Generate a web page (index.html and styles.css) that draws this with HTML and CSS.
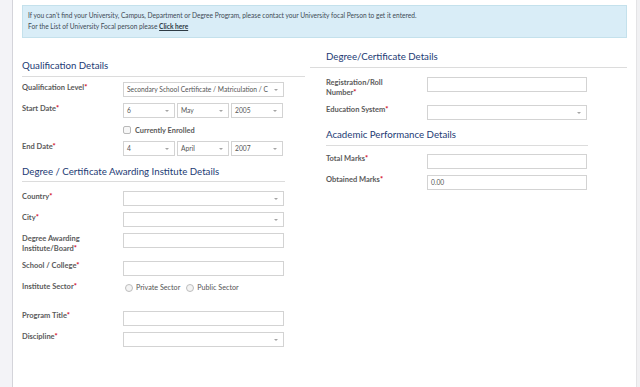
FILE: index.html
```html
<!DOCTYPE html>
<html lang="en">
<head>
  <meta charset="UTF-8">
  <meta name="viewport" content="width=device-width, initial-scale=1.0">
  <title>Qualification Details</title>
  <link rel="stylesheet" href="styles.css">
</head>
<body>
  <div class="shell">
    <div class="gutter"></div>
    <main class="panel">
      <div class="alert">
        If you can't find your University, Campus, Department or Degree Program, please contact your University focal Person to get it entered.<br>
        For the List of University Focal person please <a href="#">Click here</a>
      </div>

      <div class="columns">
        <!-- Left column -->
        <section class="col col-left">
          <h3 class="section-title first">Qualification Details</h3>
          <hr class="rule">

          <div class="row">
            <label>Qualification Level<span class="req">*</span></label>
            <div class="field select">Secondary School Certificate / Matriculation / C<span class="caret"></span></div>
          </div>

          <div class="row">
            <label>Start Date<span class="req">*</span></label>
            <div class="date">
              <div class="field select">6<span class="caret"></span></div>
              <div class="field select">May<span class="caret"></span></div>
              <div class="field select">2005<span class="caret"></span></div>
            </div>
          </div>

          <div class="row row-check">
            <label></label>
            <div class="check"><span class="box"></span>Currently Enrolled</div>
          </div>

          <div class="row">
            <label>End Date<span class="req">*</span></label>
            <div class="date">
              <div class="field select">4<span class="caret"></span></div>
              <div class="field select">April<span class="caret"></span></div>
              <div class="field select">2007<span class="caret"></span></div>
            </div>
          </div>

          <h3 class="section-title second">Degree / Certificate Awarding Institute Details</h3>
          <hr class="rule short">

          <div class="row">
            <label>Country<span class="req">*</span></label>
            <div class="field select"><span class="caret"></span></div>
          </div>
          <div class="row">
            <label>City<span class="req">*</span></label>
            <div class="field select"><span class="caret"></span></div>
          </div>
          <div class="row">
            <label>Degree Awarding<br>Institute/Board<span class="req">*</span></label>
            <div class="field"></div>
          </div>
          <div class="row">
            <label>School / College<span class="req">*</span></label>
            <div class="field"></div>
          </div>
          <div class="row row-radio">
            <label>Institute Sector<span class="req">*</span></label>
            <div class="radios">
              <span class="radio"><span class="dot"></span>Private Sector</span>
              <span class="radio"><span class="dot"></span>Public Sector</span>
            </div>
          </div>
          <div class="row">
            <label>Program Title<span class="req">*</span></label>
            <div class="field"></div>
          </div>
          <div class="row">
            <label>Discipline<span class="req">*</span></label>
            <div class="field select"><span class="caret"></span></div>
          </div>
        </section>

        <!-- Right column -->
        <section class="col col-right">
          <h3 class="section-title first">Degree/Certificate Details</h3>
          <hr class="rule">

          <div class="row">
            <label>Registration/Roll<br>Number<span class="req">*</span></label>
            <div class="field"></div>
          </div>
          <div class="row">
            <label>Education System<span class="req">*</span></label>
            <div class="field select"><span class="caret"></span></div>
          </div>

          <h3 class="section-title second">Academic Performance Details</h3>
          <hr class="rule short">

          <div class="row">
            <label>Total Marks<span class="req">*</span></label>
            <div class="field"></div>
          </div>
          <div class="row">
            <label>Obtained Marks<span class="req">*</span></label>
            <div class="field">0.00</div>
          </div>
        </section>
      </div>
    </main>
    <div class="edge"></div>
  </div>
</body>
</html>
```

FILE: styles.css
```css
body {
  margin: 0;
  font-family: Lato, "Open Sans", Arial, sans-serif;
  font-size: 7px;
  color: #555;
  background-color: #fff;
}

.shell {
  display: flex;
  height: 387px;
  overflow: hidden;
}

.gutter {
  width: 12px;
  background-color: #f3f3f7;
  border-right: 1px solid #d4d4da;
}

.edge {
  width: 3px;
  background-color: #f1f1f3;
  border-left: 1px solid #e4e4e6;
}

.panel {
  flex: 1;
  padding: 5px 9px 0;
}

.alert {
  background-color: #d9edf7;
  border: 1px solid #c4e1ec;
  padding: 4px 5px 5px;
  line-height: 11px;
  font-size: 6.6px;
  color: #3d4a55;
}

.alert a {
  color: #2d3a44;
  font-weight: 700;
  text-decoration: underline;
}

.columns {
  display: grid;
  grid-template-columns: 283px 1fr;
  column-gap: 5px;
}

.section-title {
  margin: 0 0 5px;
  font-size: 9.7px;
  line-height: 12px;
  font-weight: 400;
  color: #223a74;
}

.rule {
  margin: 0;
  border: none;
  border-top: 1px solid #dcdcdc;
}

/* left column */
.col-left .section-title.first {
  margin-top: 21px;
}

.col-left .rule {
  margin-bottom: 5px;
}

.col-left .section-title.second {
  margin-top: 9px;
  margin-bottom: 4px;
}

.col-left .rule.short {
  width: 263px;
  margin-bottom: 9px;
}

/* right column */
.col-right .section-title {
  padding-left: 16px;
}

.col-right .section-title.first {
  margin-top: 12px;
}

.col-right .rule {
  margin-bottom: 9px;
}

.col-right .row {
  padding-left: 16px;
}

.col-right .section-title.second {
  margin-top: 8px;
}

.col-right .rule.short {
  width: 262px;
  margin-left: 16px;
  margin-bottom: 8px;
}

/* form rows */
.row {
  display: flex;
  align-items: flex-start;
  margin-bottom: 6px;
}

.row label {
  width: 101px;
  flex-shrink: 0;
  font-size: 7.5px;
  font-weight: 700;
  line-height: 10.5px;
  color: #5a5a5a;
  padding-top: 0.5px;
}

.req {
  color: #d0021b;
}

.field {
  position: relative;
  width: 161px;
  height: 15px;
  box-sizing: border-box;
  border: 1px solid #d3d3d3;
  background-color: #fff;
  padding: 0 3px;
  font-size: 6.7px;
  line-height: 13px;
  color: #555;
  white-space: nowrap;
  overflow: hidden;
}

.col-right .field {
  width: 160px;
}

.select {
  padding-right: 10px;
}

.caret {
  position: absolute;
  right: 5px;
  top: 6px;
  width: 0;
  height: 0;
  border-left: 2px solid transparent;
  border-right: 2px solid transparent;
  border-top: 2px solid #a5a5a5;
}

.date {
  display: flex;
  gap: 2px;
}

.date .field {
  width: 52px;
}

.row-check {
  margin-bottom: 5px;
}

.check {
  display: flex;
  align-items: center;
  height: 12px;
  font-size: 7.4px;
  font-weight: 700;
  color: #5a5a5a;
}

.check .box {
  width: 8px;
  height: 8px;
  box-sizing: border-box;
  border: 1px solid #b9b9b9;
  border-radius: 2px;
  background-color: #f7f7f7;
  margin-right: 4px;
}

.row-radio {
  margin-bottom: 17px;
}

.radios {
  display: flex;
  align-items: center;
  gap: 4px;
  height: 12px;
  font-size: 7.2px;
  color: #555;
}

.radio {
  display: flex;
  align-items: center;
}

.radio .dot {
  width: 8px;
  height: 8px;
  box-sizing: border-box;
  border: 1px solid #bdbdbd;
  border-radius: 50%;
  background-color: #f4f4f4;
  margin: 0 3px 0 2px;
}
```
